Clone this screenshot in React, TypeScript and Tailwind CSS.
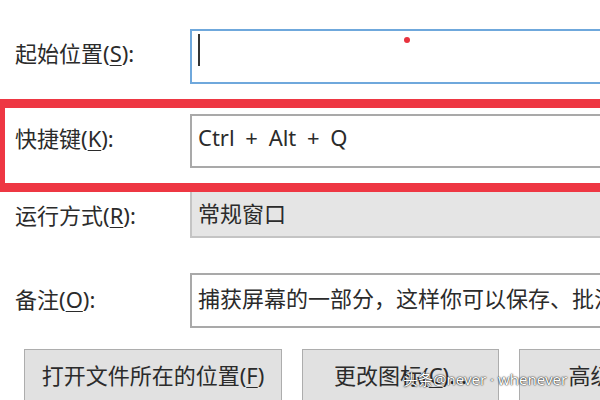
import React from "react";

const font = { fontFamily: '"Noto Sans", "Noto Sans CJK SC", sans-serif' };

function Label({ text, hot }: { text: string; hot: string }) {
  return (
    <div className="w-[175px] shrink-0 text-[22px] leading-none text-[#2b2b2b]">
      {text}(<span className="underline underline-offset-[3px] decoration-1">{hot}</span>):
    </div>
  );
}

function Btn({ text, hot, tail, w }: { text: string; hot: string; tail?: string; w: string }) {
  return (
    <div
      className={`${w} h-[70px] shrink-0 border border-[#adadad] bg-[#e1e1e1] flex justify-center pt-[14px] text-[22px] leading-none text-[#2b2b2b] whitespace-nowrap`}
    >
      <span>
        {text}(<span className="underline underline-offset-[3px] decoration-1">{hot}</span>){tail}
      </span>
    </div>
  );
}

export default function App() {
  return (
    <div className="relative w-[600px] h-[400px] overflow-hidden bg-white" style={font}>
      <div className="flex flex-col pt-[29px]">
        {/* 起始位置 */}
        <div className="flex items-center pl-[15px] h-[55px]">
          <div className="pb-[8px]">
            <Label text="起始位置" hot="S" />
          </div>
          <div className="relative w-[440px] h-[55px] shrink-0 border-2 border-[#6fa8dc] bg-white">
            <div className="absolute left-[6px] top-[3px] w-[2px] h-[32px] bg-[#333]" />
          </div>
        </div>

        {/* 快捷键 (highlighted) */}
        <div className="mt-[15px] ml-[-4px] w-[640px] h-[93px] border-[9px] border-[#ee3743] flex items-start pl-[10px] pt-[6px]">
          <div className="h-[54px] flex items-center pb-[6px]">
            <Label text="快捷键" hot="K" />
          </div>
          <div className="w-[440px] h-[54px] shrink-0 border-2 border-[#a9a9a9] bg-white flex items-center pl-[6px] pb-[8px] text-[22px] leading-none text-[#2b2b2b] [word-spacing:5px]">
            Ctrl + Alt + Q
          </div>
        </div>

        {/* 运行方式 */}
        <div className="flex items-center pl-[15px] h-[46px]">
          <Label text="运行方式" hot="R" />
          <div className="w-[440px] h-[46px] shrink-0 border-2 border-[#c4c4c4] border-t-0 bg-[#e5e5e5] flex items-center pl-[6px] pb-[2px] text-[22px] leading-none text-[#2b2b2b]">
            常规窗口
          </div>
        </div>

        {/* 备注 */}
        <div className="flex items-center pl-[15px] h-[55px] mt-[35px]">
          <div className="pb-[4px]">
            <Label text="备注" hot="O" />
          </div>
          <div className="w-[440px] h-[55px] shrink-0 border-2 border-[#a9a9a9] bg-white flex items-start pt-[12px] pl-[6px] text-[22px] leading-none text-[#2b2b2b] whitespace-nowrap overflow-hidden">
            捕获屏幕的一部分，这样你可以保存、批注或共享该图像。
          </div>
        </div>

        {/* buttons */}
        <div className="flex gap-[20px] pl-[24px] mt-[21px]">
          <Btn text="打开文件所在的位置" hot="F" w="w-[258px]" />
          <Btn text="更改图标" hot="C" tail="..." w="w-[197px]" />
          <Btn text="高级" hot="D" tail="..." w="w-[190px]" />
        </div>
      </div>

      {/* red dot */}
      <div className="absolute left-[404px] top-[37px] w-[6px] h-[6px] rounded-full bg-[#e8323e]" />

      {/* watermark */}
      <div
        className="absolute left-[403px] top-[372px] text-[15px] leading-none text-white whitespace-nowrap"
        style={{ textShadow: "0 0 2px rgba(0,0,0,0.8), 0 0 1px rgba(0,0,0,0.9)" }}
      >
        头条@never · whenever
      </div>
    </div>
  );
}
